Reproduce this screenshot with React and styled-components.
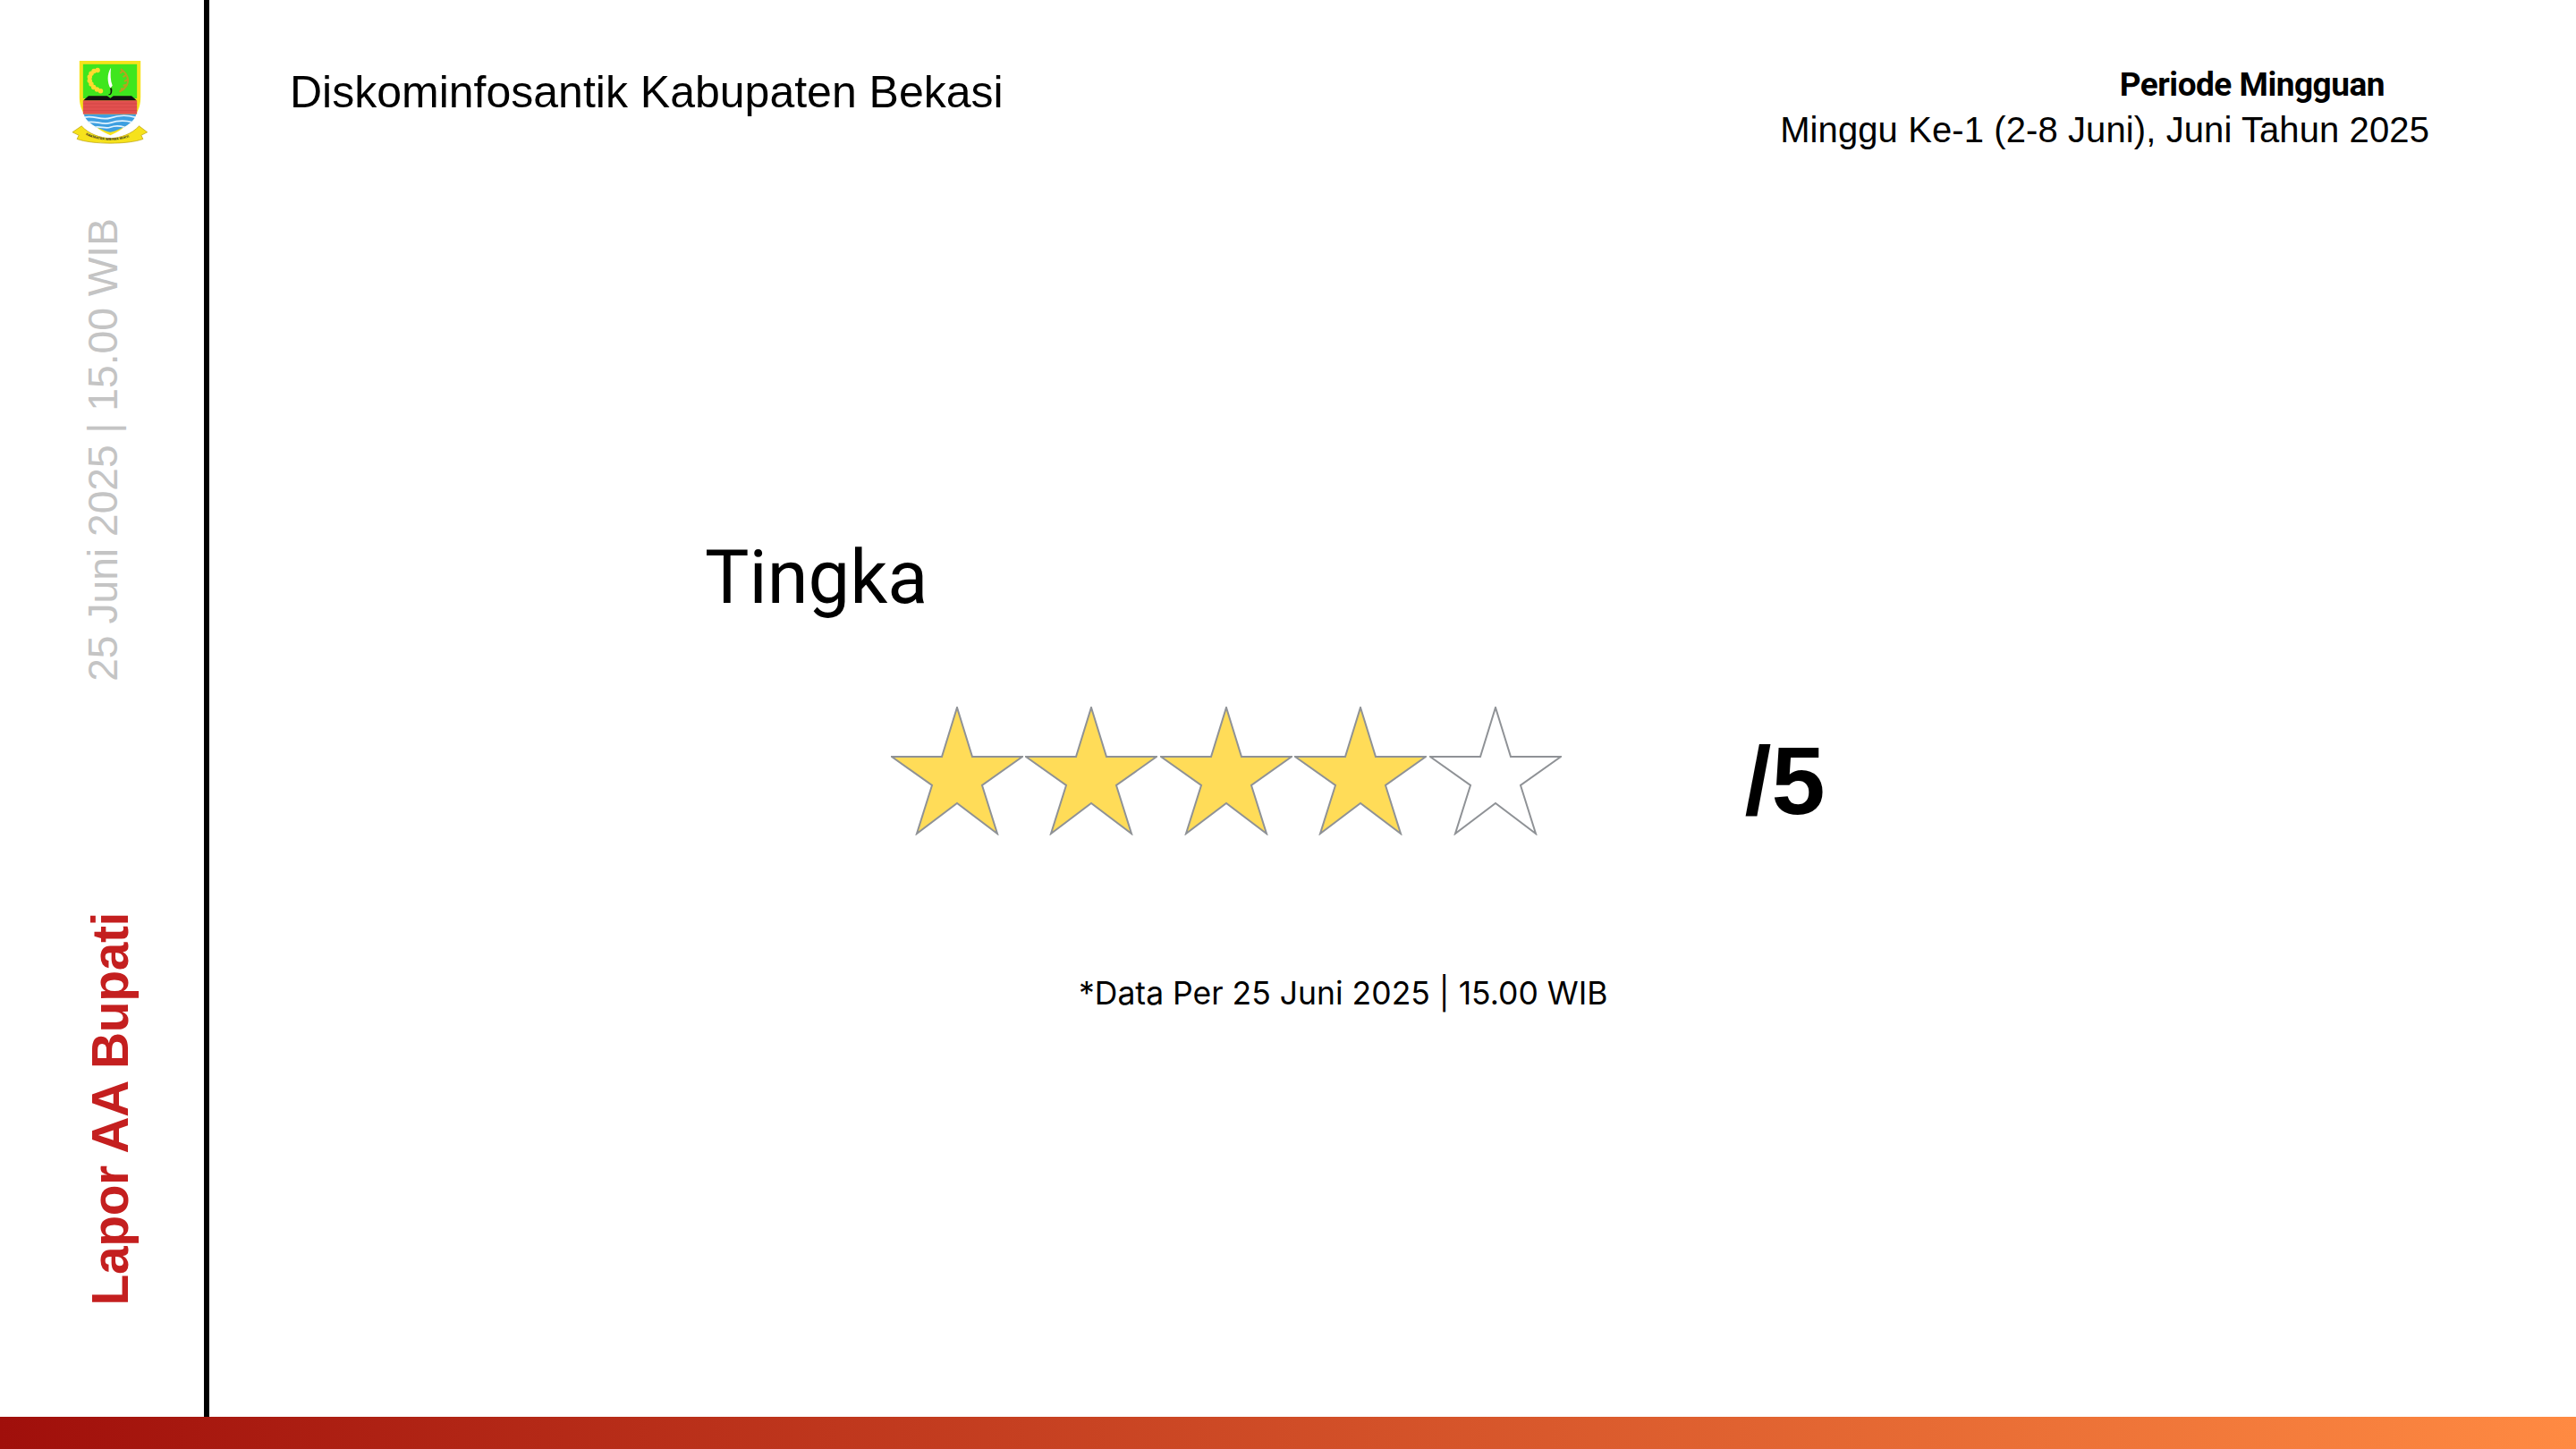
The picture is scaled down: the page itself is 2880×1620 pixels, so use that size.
import React from 'react';
import styled, { createGlobalStyle } from 'styled-components';

const GlobalStyle = createGlobalStyle`
  html, body { margin: 0; padding: 0; background: #fff; }
  body { font-family: "Liberation Sans", Arial, sans-serif; color: #000; }
`;

const Page = styled.div`
  width: 2880px;
  height: 1620px;
  display: grid;
  grid-template-rows: 1584px 36px;
  overflow: hidden;
`;

const Content = styled.div`
  display: grid;
  grid-template-columns: 228px 6px 1fr;
`;

const Sidebar = styled.aside`
  display: flex;
  flex-direction: column;
  align-items: center;
  padding-top: 68px;
  box-sizing: border-box;
`;

const CrestBox = styled.div`
  display: flex;
  height: 93px;
  margin-left: 18px;
`;

const VerticalText = styled.div`
  writing-mode: vertical-rl;
  transform: rotate(180deg);
  white-space: nowrap;
  line-height: 1;
`;

const Stamp = styled(VerticalText)`
  margin-top: 83px;
  margin-left: 2px;
  font-size: 46.2px;
  color: #c4c4c4;
`;

const Channel = styled(VerticalText)`
  margin-top: 258px;
  margin-left: 18px;
  font-size: 57px;
  letter-spacing: -0.4px;
  font-weight: 700;
  color: #c41f1f;
`;

const Rule = styled.div`
  background: #000;
`;

const Main = styled.main`
  display: flex;
  flex-direction: column;
  padding: 0 164px 0 90px;
`;

const Header = styled.header`
  display: flex;
  justify-content: space-between;
  align-items: flex-start;
  padding-top: 70px;
`;

const Agency = styled.h1`
  margin: 4px 0 0;
  font-size: 50px;
  font-weight: 400;
  line-height: 58px;
`;

const Period = styled.div`
  text-align: right;
  font-size: 40px;
  letter-spacing: 0.1px;
  line-height: 50px;
  color: #000;
`;

const PeriodTitle = styled.div`
  font-family: Roboto, sans-serif;
  font-size: 37px;
  letter-spacing: -0.5px;
  font-weight: 700;
  padding-right: 50px;
`;

const Title = styled.h2`
  margin: 426px 0 0 464px;
  font-family: Roboto, sans-serif;
  font-size: 83px;
  font-weight: 400;
  line-height: 100px;
`;

const RatingRow = styled.div`
  display: flex;
  align-items: center;
  margin: 94px 0 0 672px;
`;

const Stars = styled.div`
  display: flex;
  gap: 2.4px;
`;

const Score = styled.div`
  margin: 22px 0 0 205px;
  font-size: 108px;
  font-weight: 700;
  line-height: 1;
`;

const Note = styled.p`
  margin: 154px 0 0 882px;
  font-family: "Inter", sans-serif;
  font-size: 35.5px;
  line-height: 46px;
`;

const BottomBar = styled.div`
  background: linear-gradient(90deg, #a00f0b 0%, #ff8a42 100%);
`;

const Star = ({ filled }) => (
  <svg width="148" height="144" viewBox="0 0 148 144">
    <polygon
      points="74,1 91,56 147,56 102,88 119,142 74,108 29,142 46,88 1,56 57,56"
      fill={filled ? '#ffdc58' : '#fff'}
      stroke="#8f9296"
      strokeWidth="2"
    />
  </svg>
);

const grainLeft = [[148, 82], [136, 85], [127, 93], [122, 104], [122, 116], [127, 127], [135, 137], [146, 144], [158, 149]];
const bricks = [190, 201, 212];

const Crest = () => (
  <svg width="84" height="93" viewBox="65 52 248 268" preserveAspectRatio="none">
    <path d="M88 52H290V170C290 230 240 270 190 292C140 270 88 230 88 170Z" fill="#f6e21c" />
    <rect x="100" y="63" width="178" height="110" fill="#3fe61e" />
    {grainLeft.map(([cx, cy], i) => (
      <circle key={i} cx={cx} cy={cy} r="8" fill="#ffdb2e" />
    ))}
    <path d="M192 74C178 95 180 122 190 140L197 132C190 115 190 95 192 74Z" fill="#fff" />
    <path d="M184 160C192 160 192 150 189 140H195C197 150 196 164 184 162Z" fill="#111" />
    <path d="M224 78C252 96 262 130 220 152M232 84L222 92M244 96L232 104M250 112L236 118M248 128L232 132M238 142L224 142" fill="none" stroke="#b7a21f" strokeWidth="6" />
    <path d="M100 180L118 165H180L190 172L200 165H260L278 180Z" fill="#111" />
    <rect x="100" y="180" width="178" height="44" fill="#e2504f" />
    {bricks.map((y) => (
      <line key={y} x1="100" x2="278" y1={y} y2={y} stroke="#c9403e" strokeWidth="1.5" />
    ))}
    <path d="M103 224H275C270 250 230 272 190 282C150 272 108 250 103 224Z" fill="#3d9fe0" />
    <path d="M106 234C135 226 160 246 190 236S245 226 272 234M116 250C140 244 165 260 190 252S240 244 262 250M140 266C155 262 175 272 190 266S225 262 238 266" fill="none" stroke="#dff2ff" strokeWidth="5" />
    <path d="M65 282L95 262C120 288 155 300 190 302C225 300 260 288 285 262L312 282L292 292L298 304C250 322 130 322 80 304L86 292Z" fill="#f6e21c" stroke="#b99f10" strokeWidth="2" />
    <path id="motto" d="M108 290C150 314 230 314 270 290" fill="none" />
    <text fontSize="10.5" fontFamily="Liberation Sans, sans-serif" fontWeight="700" fill="#222">
      <textPath href="#motto">SWATANTRA WIBAWA MUKTI</textPath>
    </text>
  </svg>
);

export default function App() {
  return (
    <Page>
      <GlobalStyle />
      <Content>
        <Sidebar>
          <CrestBox>
            <Crest />
          </CrestBox>
          <Stamp>25 Juni 2025 | 15.00 WIB</Stamp>
          <Channel>Lapor AA Bupati</Channel>
        </Sidebar>
        <Rule />
        <Main>
          <Header>
            <Agency>Diskominfosantik Kabupaten Bekasi</Agency>
            <Period>
              <PeriodTitle>Periode Mingguan</PeriodTitle>
              <div>Minggu Ke-1 (2-8 Juni), Juni Tahun 2025</div>
            </Period>
          </Header>
          <Title>Tingka</Title>
          <RatingRow>
            <Stars>
              {[true, true, true, true, false].map((filled, i) => (
                <Star key={i} filled={filled} />
              ))}
            </Stars>
            <Score>/5</Score>
          </RatingRow>
          <Note>*Data Per 25 Juni 2025 | 15.00 WIB</Note>
        </Main>
      </Content>
      <BottomBar />
    </Page>
  );
}
